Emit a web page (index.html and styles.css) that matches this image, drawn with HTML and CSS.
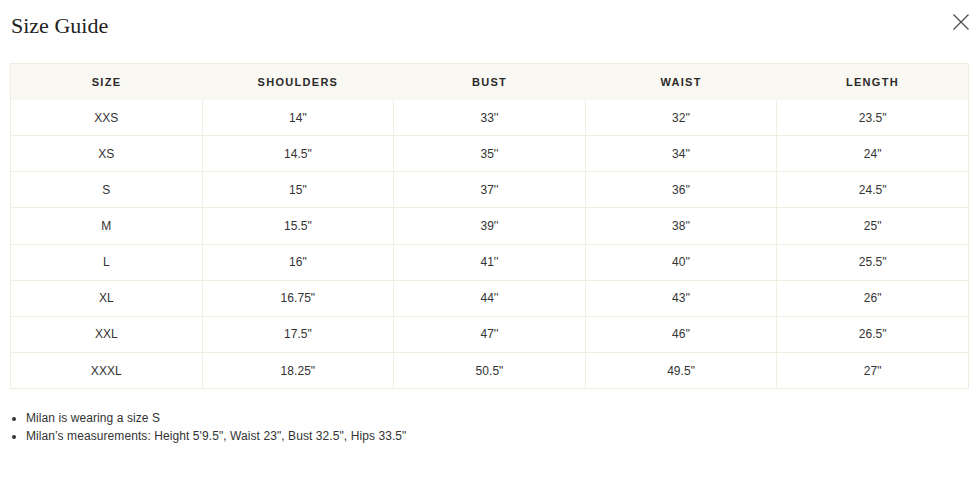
FILE: index.html
```html
<!DOCTYPE html>
<html lang="en">
<head>
<meta charset="utf-8">
<title>Size Guide</title>
<link rel="stylesheet" href="styles.css">
</head>
<body>
<div class="modal">
  <div class="modal-head">
    <h1 class="title">Size Guide</h1>
    <button class="close" aria-label="Close">
      <svg width="16" height="16" viewBox="0 0 16 16" aria-hidden="true">
        <path d="M0.5 0.5 L15.5 15.5 M15.5 0.5 L0.5 15.5" stroke="#4a4a4a" stroke-width="1.2" fill="none"/>
      </svg>
    </button>
  </div>
  <table class="sizes">
    <thead>
      <tr><th>SIZE</th><th>SHOULDERS</th><th>BUST</th><th>WAIST</th><th>LENGTH</th></tr>
    </thead>
    <tbody>
      <tr><td>XXS</td><td>14"</td><td>33''</td><td>32''</td><td>23.5"</td></tr>
      <tr><td>XS</td><td>14.5"</td><td>35''</td><td>34''</td><td>24"</td></tr>
      <tr><td>S</td><td>15"</td><td>37''</td><td>36''</td><td>24.5"</td></tr>
      <tr><td>M</td><td>15.5"</td><td>39''</td><td>38''</td><td>25"</td></tr>
      <tr><td>L</td><td>16"</td><td>41''</td><td>40''</td><td>25.5"</td></tr>
      <tr><td>XL</td><td>16.75"</td><td>44''</td><td>43''</td><td>26"</td></tr>
      <tr><td>XXL</td><td>17.5"</td><td>47''</td><td>46''</td><td>26.5"</td></tr>
      <tr><td>XXXL</td><td>18.25"</td><td>50.5"</td><td>49.5"</td><td>27"</td></tr>
    </tbody>
  </table>
  <ul class="notes">
    <li>Milan is wearing a size S</li>
    <li>Milan’s measurements: Height 5'9.5", Waist 23", Bust 32.5", Hips 33.5"</li>
  </ul>
</div>
</body>
</html>
```
FILE: styles.css
```css
html, body {
  margin: 0;
  padding: 0;
  background: #ffffff;
}

.modal {
  padding: 13px 8px 0 10px;
  font-family: "Liberation Sans", Arial, sans-serif;
  color: #333333;
}

.modal-head {
  display: flex;
  justify-content: space-between;
  align-items: flex-start;
  margin-bottom: 24px;
}

.title {
  margin: 0 0 0 1px;
  font-family: "Liberation Serif", "Times New Roman", serif;
  font-weight: normal;
  font-size: 22px;
  line-height: 26px;
  color: #222222;
}

.close {
  border: 0;
  background: none;
  padding: 0;
  margin-top: 1px;
  width: 16px;
  height: 16px;
  display: block;
  cursor: pointer;
}

.close svg {
  display: block;
}

.sizes {
  width: 100%;
  table-layout: fixed;
  border-collapse: collapse;
  border: 1px solid #f0ede1;
}

.sizes th {
  height: 36px;
  padding: 0;
  background: #faf8f3;
  font-size: 11px;
  font-weight: bold;
  letter-spacing: 1.3px;
  color: #2a2a2a;
  text-align: center;
  vertical-align: middle;
}

.sizes td {
  height: 35.15px;
  padding: 0;
  font-size: 12px;
  letter-spacing: 0.05px;
  color: #333333;
  text-align: center;
  vertical-align: middle;
  border: 1px solid #f0ede1;
}

.sizes tbody tr:first-child td {
  border-top: 0;
}

.notes {
  margin: 20px 0 0 0;
  padding: 0 0 0 16px;
  font-size: 12px;
  line-height: 18px;
  letter-spacing: 0.08px;
  color: #333333;
}
```
